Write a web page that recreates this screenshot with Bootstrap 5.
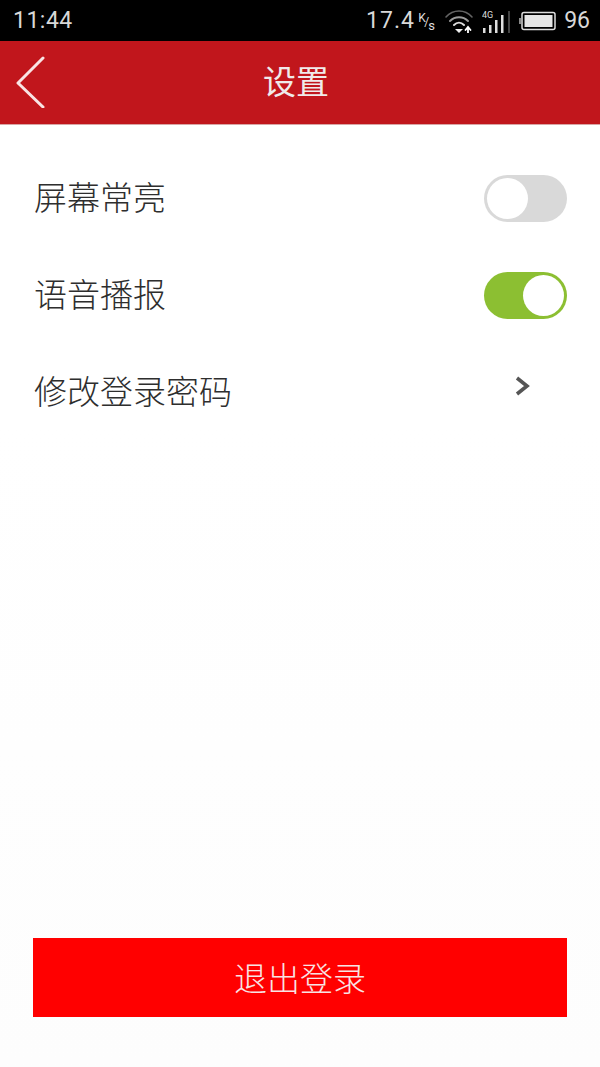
<!DOCTYPE html>
<html lang="zh-CN">
<head>
<meta charset="utf-8">
<link rel="stylesheet" href="https://cdn.jsdelivr.net/npm/bootstrap@5.3.0/dist/css/bootstrap.min.css">
<style>
html,body{height:100%;margin:0}
body{font-family:"Roboto","Noto Sans CJK SC",sans-serif;background:#fff;overflow:hidden}
.app-shell{height:1067px;width:600px;background:linear-gradient(#fff 40%,#fdfdfd)}
.status-strip{height:41px;background:#000;color:#d8d8d8;font-size:23px;line-height:1;padding:0 10px 0 13px}
.status-time{letter-spacing:.5px}
.speed-unit{font-size:12px;line-height:1;width:18px;margin-left:3px;color:#ddd;position:relative;height:20px}
.speed-k{position:absolute;left:0;top:1px}
.speed-slash{position:absolute;left:6px;top:5px}
.speed-s{position:absolute;left:10px;top:8px;font-size:13px}
.speed-num{letter-spacing:1.100px}
.title-strip{height:84px;background:#c1161c;color:#fff;border-bottom:1px solid #d9a5a5}
.title-text{font-size:33px;line-height:1;font-weight:400;color:#f0eaea;margin-right:8px}
.back-link{left:16px;top:15px;width:30px;height:52px}
.settings-list{padding:0 33px 0 34px;margin-top:25px}
.setting-row{height:97px;font-size:33px;font-weight:300;color:#2e2e2e}
.setting-label{line-height:1;letter-spacing:0}
.toggle-shape{width:83px;height:47px;border-radius:24px;position:relative}
.toggle-off{background:#d9d9d9}
.toggle-on{background:#8cbf32}
.toggle-knob{position:absolute;top:3px;width:41px;height:41px;border-radius:50%;background:#fff}
.toggle-off .toggle-knob{left:3px}
.toggle-on .toggle-knob{right:3px}
.chevron-box{width:83px;height:48px;padding-left:31px;padding-bottom:13px}
.spacer-zone{flex:1}
.logout-btn{display:block;width:534px;height:79px;margin:0 33px 50px;background:#f00;color:#f8e4e4;border:0;border-radius:0;font-size:33px;font-weight:300;line-height:1;padding:3px 0 0}
.logout-btn:hover{background:#f00;color:#f8e4e4}
</style>
</head>
<body>
<div class="app-shell d-flex flex-column">
  <div class="status-strip d-flex align-items-center justify-content-between">
    <span class="status-time">11:44</span>
    <div class="d-flex align-items-center">
      <span class="speed-num">17.4</span>
      <span class="speed-unit"><span class="speed-k">K</span><span class="speed-slash">/</span><span class="speed-s">s</span></span>
      <svg class="ms-2" width="30" height="24" viewBox="0 0 30 24" fill="none" stroke="#ddd" stroke-linecap="round">
        <path d="M2 8C9 0 21 0 28 8" stroke-width="1.6" opacity=".45"/>
        <path d="M6 12c5-5 13-5 18 0" stroke-width="2" opacity=".7"/>
        <path d="M10 16c3-3 7-3 10 0" stroke-width="2"/>
        <path d="M11 20h8l-4 4z" fill="#eee" stroke="none"/>
        <path d="M24 24v-5M21.500 21l2.500-3 2.500 3" stroke-width="1.800" stroke="#fff"/>
      </svg>
      <svg class="ms-2" width="29" height="24" viewBox="0 0 29 24" fill="#ddd">
        <text x="0" y="9" font-size="9" font-family="Roboto" fill="#ddd">4G</text>
        <rect x="1" y="19" width="2.500" height="5"/><rect x="7" y="16" width="2.500" height="8"/><rect x="13" y="11" width="2.500" height="13"/><rect x="19" y="6" width="2.500" height="18"/><rect x="26" y="2" width="2" height="22" opacity=".3"/>
      </svg>
      <svg class="ms-2" width="37" height="20" viewBox="0 0 37 20"><path d="M0 7h2v6H0z" fill="#888"/><rect x="3" y="1.500" width="33" height="17" rx="2" fill="none" stroke="#ddd" stroke-width="1.500"/><rect x="5.500" y="4" width="28" height="12" fill="#e6e6e6"/></svg>
      <span class="ms-2">96</span>
    </div>
  </div>
  <div class="title-strip position-relative d-flex align-items-center justify-content-center">
    <svg class="back-link position-absolute" viewBox="0 0 30 52" fill="none" stroke="#f9e4e4" stroke-width="3" stroke-linecap="round" stroke-linejoin="round"><path d="M27 2 2 27l25 24"/></svg>
    <span class="title-text">设置</span>
  </div>
  <div class="settings-list">
    <div class="setting-row d-flex align-items-center justify-content-between">
      <span class="setting-label">屏幕常亮</span>
      <div class="toggle-shape toggle-off"><div class="toggle-knob"></div></div>
    </div>
    <div class="setting-row d-flex align-items-center justify-content-between">
      <span class="setting-label">语音播报</span>
      <div class="toggle-shape toggle-on"><div class="toggle-knob"></div></div>
    </div>
    <div class="setting-row d-flex align-items-center justify-content-between">
      <span class="setting-label">修改登录密码</span>
      <div class="chevron-box d-flex align-items-center">
        <svg width="16" height="20" viewBox="0 0 16 20" fill="none" stroke="#555" stroke-width="3.600" stroke-linejoin="miter"><path d="M2 2l10 8-10 8"/></svg>
      </div>
    </div>
  </div>
  <div class="spacer-zone"></div>
  <button class="btn logout-btn" type="button">退出登录</button>
</div>
<script src="https://cdn.jsdelivr.net/npm/bootstrap@5.3.0/dist/js/bootstrap.bundle.min.js"></script>
</body>
</html>
